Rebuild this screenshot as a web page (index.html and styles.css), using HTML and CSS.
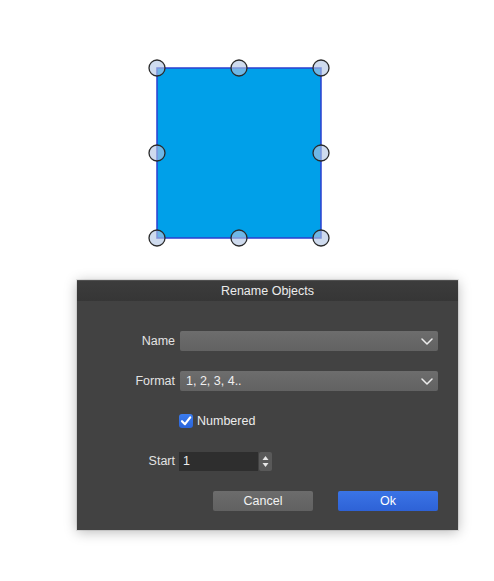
FILE: index.html
```html
<!DOCTYPE html>
<html>
<head>
<meta charset="utf-8">
<link rel="stylesheet" href="styles.css">
</head>
<body>
<div class="canvas">
  <svg class="shape" width="494" height="280" viewBox="0 0 494 280">
    <rect x="157" y="68" width="164" height="170" fill="#00a0e9" stroke="#2b3fcf" stroke-width="1.5"/>
    <g fill="rgba(177,197,227,0.62)" stroke="#2a2a2a" stroke-width="1.3">
      <circle cx="157" cy="68" r="8"/>
      <circle cx="239" cy="68" r="8"/>
      <circle cx="321" cy="68" r="8"/>
      <circle cx="157" cy="153" r="8"/>
      <circle cx="321" cy="153" r="8"/>
      <circle cx="157" cy="238" r="8"/>
      <circle cx="239" cy="238" r="8"/>
      <circle cx="321" cy="238" r="8"/>
    </g>
  </svg>
</div>
<div class="dialog">
  <div class="titlebar">Rename Objects</div>
  <div class="body">
    <label class="lbl">Name</label>
    <div class="select"><span class="val"></span>
      <svg class="chev" width="12" height="7" viewBox="0 0 12 7"><polyline points="1,1 6,6 11,1" fill="none" stroke="#ececec" stroke-width="1.5" stroke-linecap="round" stroke-linejoin="round"/></svg>
    </div>
    <label class="lbl">Format</label>
    <div class="select"><span class="val">1, 2, 3, 4..</span>
      <svg class="chev" width="12" height="7" viewBox="0 0 12 7"><polyline points="1,1 6,6 11,1" fill="none" stroke="#ececec" stroke-width="1.5" stroke-linecap="round" stroke-linejoin="round"/></svg>
    </div>
    <span class="lbl"></span>
    <div class="check-row">
      <span class="checkbox">
        <svg width="14" height="14" viewBox="0 0 14 14"><polyline points="3,7.2 6,10.2 11.2,3.4" fill="none" stroke="#fff" stroke-width="2.2" stroke-linecap="round" stroke-linejoin="round"/></svg>
      </span>
      <span class="check-label">Numbered</span>
    </div>
    <label class="lbl">Start</label>
    <div class="start-row">
      <div class="number">1</div>
      <div class="stepper">
        <svg width="13" height="19" viewBox="0 0 13 19"><polygon points="6.5,4 9.5,8 3.5,8" fill="#e6e6e6"/><polygon points="6.5,15 9.5,11 3.5,11" fill="#e6e6e6"/></svg>
      </div>
    </div>
    <div class="buttons">
      <button class="btn cancel">Cancel</button>
      <button class="btn ok">Ok</button>
    </div>
  </div>
</div>
</body>
</html>
```
FILE: styles.css
```css
html, body {
  margin: 0;
  padding: 0;
  background: #ffffff;
}
body {
  width: 494px;
  height: 581px;
  font-family: "Liberation Sans", Arial, sans-serif;
  overflow: hidden;
}
.canvas {
  height: 280px;
}
.shape {
  display: block;
}
.dialog {
  margin-left: 77px;
  width: 381px;
  height: 250px;
  background: #424242;
  box-shadow: 0 2px 12px rgba(0, 0, 0, 0.28), 0 0 0 1px rgba(0, 0, 0, 0.08);
  display: flex;
  flex-direction: column;
}
.titlebar {
  height: 21px;
  line-height: 21px;
  text-align: center;
  background: linear-gradient(#3c3c3c, #363636);
  border-top: 1px solid #505050;
  box-sizing: border-box;
  color: #ececec;
  font-size: 12.5px;
}
.body {
  flex: 1;
  display: grid;
  grid-template-columns: 98px 1fr;
  grid-auto-rows: 20px;
  column-gap: 5px;
  row-gap: 20px;
  padding: 30px 20px 0 0;
  align-items: center;
}
.lbl {
  text-align: right;
  color: #e2e2e2;
  font-size: 12.5px;
  line-height: 20px;
}
.select {
  height: 20px;
  background: linear-gradient(#6d6d6d, #626262);
  border-radius: 2px;
  display: flex;
  align-items: center;
  justify-content: space-between;
  padding: 0 5px 0 6px;
  box-sizing: border-box;
}
.val {
  color: #f0f0f0;
  font-size: 12.5px;
}
.chev {
  margin-top: 1px;
}
.check-row {
  display: flex;
  align-items: center;
  gap: 4px;
  margin-left: -1px;
}
.checkbox {
  width: 14px;
  height: 14px;
  border-radius: 3px;
  background: linear-gradient(#3c7df0, #2a64d9);
  display: flex;
}
.check-label {
  color: #ececec;
  font-size: 12.5px;
}
.start-row {
  display: flex;
  align-items: center;
  gap: 1px;
  margin-left: -1px;
}
.number {
  width: 79px;
  height: 19px;
  background: #2e2e2e;
  color: #ececec;
  font-size: 12.5px;
  line-height: 19px;
  padding-left: 4px;
  box-sizing: border-box;
}
.stepper {
  width: 13px;
  height: 19px;
  background: #595959;
  border-radius: 2px;
  display: flex;
}
.buttons {
  grid-column: 1 / 3;
  display: flex;
  justify-content: flex-end;
  gap: 25px;
}
.btn {
  width: 100px;
  height: 20px;
  border: none;
  border-radius: 2px;
  font-family: "Liberation Sans", Arial, sans-serif;
  font-size: 12.5px;
  color: #f2f2f2;
  padding: 0;
}
.cancel {
  background: linear-gradient(#6c6c6c, #616161);
}
.ok {
  background: linear-gradient(#3a74e6, #2e62d6);
  color: #ffffff;
}
```
